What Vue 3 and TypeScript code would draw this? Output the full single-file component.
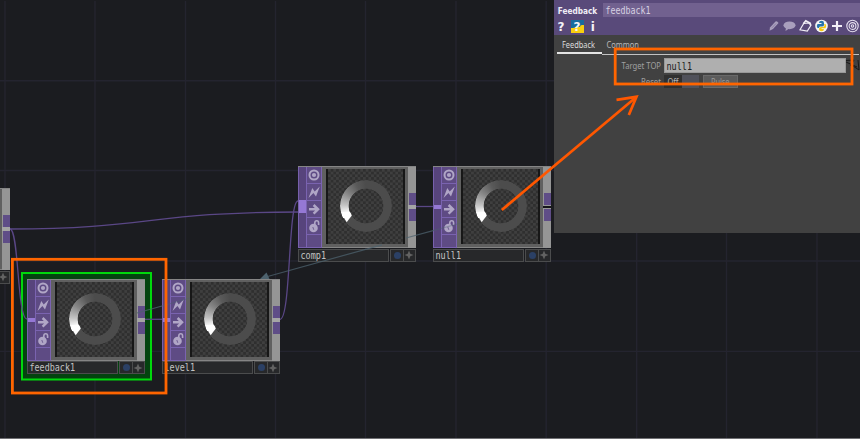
<script setup lang="ts">
interface OpNode {
  name: string
  x: number
  y: number
  nameWidth: number
  input: '' | 'single' | 'multi'
  outLine: 'light' | 'dark'
}

const nodes: OpNode[] = [
  { name: '', x: -108, y: 188, nameWidth: 0, input: '', outLine: 'light' },
  { name: 'comp1', x: 298, y: 166, nameWidth: 25.5, input: 'multi', outLine: 'light' },
  { name: 'null1', x: 433, y: 166, nameWidth: 25.5, input: 'single', outLine: 'dark' },
  { name: 'feedback1', x: 27, y: 278.6, nameWidth: 45.5, input: 'single', outLine: 'light' },
  { name: 'level1', x: 162, y: 278.6, nameWidth: 30.5, input: 'single', outLine: 'light' },
]

const gridX = [5, 95, 185.5, 275.5, 365.5, 456, 546.2, 636.7, 726.5, 817]
const gridY = [80.8, 170.5, 261, 351.4]
</script>

<template>
  <main class="editor">
    <svg class="layer" width="860" height="439">
      <g stroke="#24242f" stroke-width="1.4">
        <line v-for="x in gridX" :key="'x' + x" :x1="x" :x2="x" y1="1" y2="438" />
        <line v-for="y in gridY" :key="'y' + y" x1="0" x2="860" :y1="y" :y2="y" />
      </g>
      <rect x="22" y="273" width="129" height="106.500" fill="#04430f" stroke="#00d80c" stroke-width="2" />
      <g fill="none" stroke="#5a4786" stroke-width="1.3">
        <path d="M10 229 C150 229 150 212 298 212" />
        <path d="M10 229 C19 229 17 319 27 319" />
        <path d="M145 319.300 H162" />
        <path d="M280 319.300 C291 319.300 288 201 298 201" />
        <path d="M415 206.500 H434" />
      </g>
    </svg>

    <article v-for="n in nodes" :key="n.name" class="node" :style="{ left: n.x + 'px', top: n.y + 'px' }">
      <div class="body">
        <div class="inputs"><i v-if="n.input" :class="n.input"></i></div>
        <div class="flags">
          <span>
            <svg viewBox="0 0 16 16"><circle cx="8" cy="8" r="4.500" fill="none" stroke="#b0a6c6" stroke-width="2" /><circle cx="8" cy="8" r="2.100" fill="#b0a6c6" /></svg>
          </span>
          <span>
            <svg viewBox="0 0 16 16"><path d="M2.500 14 L6.300 4 L8.700 7.400 L13.800 2.500 L10 12.400 L7.400 9 Z" fill="#b0a6c6" /></svg>
          </span>
          <span>
            <svg viewBox="0 0 16 16"><path d="M3 8.300 H11 M7.600 4 L12 8.300 L7.600 12.600" fill="none" stroke="#b0a6c6" stroke-width="2.500" /></svg>
          </span>
          <span>
            <svg viewBox="0 0 16 16"><circle cx="7.500" cy="10" r="4.300" fill="#b0a6c6" /><path d="M8.800 7.500 V5 Q8.800 2.800 10.800 2.800 Q12.600 2.800 12.600 5 V7" fill="none" stroke="#b0a6c6" stroke-width="1.600" /><path d="M6.800 9 L7.800 11.800" stroke="#5e4b84" stroke-width=".8" /></svg>
          </span>
          <span></span>
        </div>
        <div class="frame">
          <div class="view">
            <div class="ring"></div>
            <svg class="tip" width="79" height="75"><path d="M15.300 43 L15.300 46 L19.700 53.300 L24.800 46.400 L23.500 43.500 Z" fill="#fff" /></svg>
          </div>
        </div>
        <div class="outputs">
          <b></b><i :class="n.outLine"></i><b></b>
        </div>
      </div>
      <div class="foot">
        <div class="name">
          <svg v-if="n.name" width="60" height="11"><text x="1.500" y="9" class="mono" :textLength="n.nameWidth" lengthAdjust="spacingAndGlyphs">{{ n.name }}</text></svg>
        </div>
        <div class="dot"><i></i></div>
        <div class="plus">
          <svg width="10" height="10" viewBox="0 0 10 10"><path d="M5 .5 L6.300 3.700 L9.500 5 L6.300 6.300 L5 9.500 L3.700 6.300 L.5 5 L3.700 3.700 Z" fill="#626262" /></svg>
        </div>
      </div>
    </article>

    <svg class="layer" width="860" height="439">
      <g stroke="#4d626e" stroke-width="1.200">
        <path d="M137 313 L162 306" opacity=".8" />
        <path d="M162 306 L190 298" opacity=".45" />
        <path d="M264 277.500 L382 244.800" opacity=".75" />
        <path d="M406 238 L434 230.300" opacity=".75" />
        <path d="M434 230.300 L461 223" opacity=".4" />
      </g>
      <path d="M260 279 L266.500 272.500 L269.500 279 Z" fill="#4d626e" />
    </svg>

    <section class="panel">
      <header>
        <div class="title">
          <svg width="49" height="14"><text x="3.700" y="10.500" class="bold" textLength="39.500" lengthAdjust="spacingAndGlyphs">Feedback</text></svg>
          <div class="opname">
            <svg width="80" height="14"><text x="2.500" y="11.300" class="mono head" textLength="45" lengthAdjust="spacingAndGlyphs">feedback1</text></svg>
          </div>
        </div>
        <div class="tools">
          <div class="left">
            <svg width="10" height="14"><text x=".5" y="11.500" class="glyph">?</text></svg>
            <svg class="pyhelp" width="13" height="13"><rect width="13" height="8" fill="#176a9e" /><path d="M0 8 H2 Q4 8 4 7 H9 Q9 5 11 5 H13 V13 H0Z" fill="#f8cf10" /><text x="2.500" y="11" class="glyph">?</text></svg>
            <svg width="8" height="14"><text x=".7" y="11.500" class="glyph">i</text></svg>
          </div>
          <div class="right">
            <svg width="12" height="14" viewBox="0 0 12 14"><path d="M1.500 11.800 L2 8.500 L7.500 2.500 Q9 1.500 10.500 4 L5 10 Z" fill="#a99fbd" /><path d="M4 8.800 L8 4.500" stroke="#85799f" stroke-width=".8" /></svg>
            <svg width="13" height="14" viewBox="0 0 13 14"><ellipse cx="6.500" cy="6.300" rx="6" ry="3.900" fill="#a99fbd" /><path d="M3 8 L2.500 12 L7 9Z" fill="#a99fbd" /></svg>
            <svg width="13" height="14" viewBox="0 0 13 14"><path d="M1 10.800 L4.700 4.500 L10.500 3.800 L11.800 6.500 L8.300 12 Z" fill="none" stroke="#f0edf5" stroke-width="1.200" /><path d="M4.300 4.800 L6.800 1.800 L11 4.200 L11.800 6.500" fill="none" stroke="#f0edf5" stroke-width="1.700" /></svg>
            <svg width="13" height="14" viewBox="0 0 13 14"><circle cx="6.500" cy="7" r="6.300" fill="#f4f4f4" /><path d="M4 4 Q4 1.800 6.500 1.800 Q9 1.800 9 4 V6 Q9 7.500 7 7.500 H5 Q4 7.500 4 9 H2.500 Q1 7 2.500 5 H6.500 V4Z" fill="#2875ac" /><path d="M9 5 H10.500 Q12 7 10.500 9.200 H6.500 V10 H9 Q9 12.200 6.500 12.200 Q4 12.200 4 10 Q4 8 6 8 H8 Q9.500 8 9.500 6Z" fill="#f6c80f" /></svg>
            <svg width="12" height="14" viewBox="0 0 12 14"><path d="M6 2 V12 M1 7 H11" stroke="#f3f0f7" stroke-width="2.200" /></svg>
            <svg width="13" height="14" viewBox="0 0 13 14"><g fill="none" stroke="#e6e0ef" stroke-width="1.100"><circle cx="6.500" cy="7" r="5.700" /><circle cx="6.500" cy="7" r="3.400" /><circle cx="6.500" cy="7" r="1.200" /></g></svg>
          </div>
        </div>
      </header>
      <nav>
        <div class="tab active"><svg width="45" height="15"><text x="5" y="12.800" class="sans tabt" textLength="33" lengthAdjust="spacingAndGlyphs">Feedback</text></svg></div>
        <div class="tab"><svg width="45" height="15"><text x="4.500" y="12.800" class="sans tabt dim" textLength="32.500" lengthAdjust="spacingAndGlyphs">Common</text></svg></div>
      </nav>
      <div class="row">
        <div class="label"><svg width="46" height="14"><text x="3.500" y="10.700" class="sans lab" textLength="39.500" lengthAdjust="spacingAndGlyphs">Target TOP</text></svg></div>
        <div class="field"><svg width="50" height="14"><text x="1.500" y="10.700" class="mono dark" textLength="25.500" lengthAdjust="spacingAndGlyphs">null1</text></svg></div>
        <svg class="pick" width="14" height="15"><path d="M0 2.500 L8 2 L4.500 8 M0 4 L11 9 M7 8 L13 12 L12 2" fill="none" stroke="#181818" /></svg>
      </div>
      <div class="row second">
        <div class="label"><svg width="46" height="13"><text x="23" y="9.700" class="sans lab" textLength="20" lengthAdjust="spacingAndGlyphs">Reset</text></svg></div>
        <div class="off"><svg width="18" height="13"><text x="3.500" y="9.700" class="sans offt" textLength="11" lengthAdjust="spacingAndGlyphs">Off</text></svg></div>
        <div class="toggle"></div>
        <div class="pulse"><svg width="33" height="11"><text x="7" y="8.900" class="sans pulset" textLength="18.500" lengthAdjust="spacingAndGlyphs">Pulse</text></svg></div>
      </div>
    </section>

    <svg class="layer" width="860" height="439">
      <g fill="none" stroke="#ff6500" stroke-width="2.800">
        <rect x="12.400" y="259.300" width="153.600" height="133.700" />
        <rect x="615.200" y="49" width="236.800" height="35" />
      </g>
      <g fill="none" stroke="#ff5700" stroke-width="2.700">
        <path d="M501.800 210 L636 97.300" />
        <path d="M616.500 99.800 L636.500 96.800 L628.800 115" />
      </g>
    </svg>
  </main>
</template>

<style>
body { background: #1b1c20; overflow: hidden; }
</style>

<style scoped>
.editor { position: relative; width: 860px; height: 439px; overflow: hidden; background: #1b1c20; box-sizing: border-box; border-bottom: 1px solid #707074; }
.editor * { box-sizing: border-box; }
svg { display: block; flex: none; overflow: visible; }
.layer { position: absolute; left: 0; top: 0; }
.mono { font: 10.500px "DejaVu Sans Mono", monospace; fill: #c4c4c4; }
.mono.head { fill: #d6d0e2; }
.mono.dark { fill: #202020; }
.sans { font: 9.5px "Noto Sans", sans-serif; }
.bold { font: bold 8px "DejaVu Sans", sans-serif; fill: #f1eef6; }
.glyph { font: bold 12px "DejaVu Sans", sans-serif; fill: #f5f3f8; }
.tabt { fill: #dcdcdc; font-size: 9.300px; }
.tabt.dim { fill: #b8b8b8; }
.lab { fill: #a0a0a0; font-size: 9.200px; }
.offt { fill: #b8b8b8; }
.pulset { fill: #989898; font-size: 9px; }

.node { position: absolute; width: 117.500px; display: flex; flex-direction: column; gap: .5px; }
.body { height: 82px; display: flex; background: #666; border-top: 1px solid #858585; }
.inputs { width: 7.5px; background: #57447c; border: 1px solid #7760ac; border-right: 0; border-top: 0; }
.inputs i { display: block; width: 7px; background: #9578d5; }
.inputs .single { height: 4px; margin-top: 38px; }
.inputs .multi { height: 13px; margin-top: 33px; }
.flags { width: 16.500px; background: #5e4b84; border: 1px solid #7a63b0; border-top: 0; display: grid; grid-template-rows: 17px 17px 17px 17px 1fr; }
.flags span { border-bottom: 1px solid #7a63b0; }
.flags span:last-child { border: 0; }
.flags svg { width: 16px; height: 16px; margin-left: -1px; }
.frame { width: 86px; padding: 2px 3.500px 4px 4px; background: #606060; border-bottom: 1px solid #858585; }
.view { position: relative; height: 75px; border: solid #171717; border-width: 0 2px; background: repeating-conic-gradient(#2f2f2f 0 25%, #3f3f3f 0 50%) 0 0 / 5.4px 5.4px; }
.ring { position: absolute; left: 12px; top: 11.300px; width: 52px; height: 52px; border-radius: 50%; background: conic-gradient(#4c4c4c 0 241deg, #fff 241deg 250deg, #c4c4c4 272deg, #858585 305deg, #5a5a5a 335deg, #4c4c4c 359deg); -webkit-mask: radial-gradient(circle, transparent 17px, #000 17.700px); mask: radial-gradient(circle, transparent 17px, #000 17.700px); }
.tip { position: absolute; left: -1.200px; top: 0; }
.outputs { width: 7.5px; background: #959595; padding-top: 26px; display: flex; flex-direction: column; }
.outputs b { height: 12px; background: #5f4d87; margin-left: 1px; }
.outputs i { height: 4px; background: #a5a5a5; }
.outputs i.dark { background: linear-gradient(#999 1px, #15151a 1px 3px, #999 3px); }
.foot { height: 13px; display: flex; }
.foot > div { height: 13px; border: 1px solid #4b4c4d; background: #27282a; display: flex; align-items: center; }
.foot .name { width: 91px; }
.foot .dot { width: 14px; margin-left: 1px; justify-content: center; }
.dot i { width: 7px; height: 7px; border-radius: 50%; background: #2b4065; }
.foot .plus { width: 12px; margin-left: -1px; flex: 1; justify-content: center; }

.panel { position: absolute; left: 554px; top: 0; width: 306px; height: 233.400px; background: #414141; }
header { height: 35px; background: #594a7a; padding-top: 3px; }
.title { display: flex; height: 14px; }
.opname { flex: 1; background: #71618f; }
.tools { display: flex; justify-content: space-between; padding: 2px 1px 0 3px; }
.left { display: flex; gap: 4px; }
.pyhelp { margin-top: 1px; }
.left svg:last-child { margin-left: 1.500px; }
.right { display: flex; gap: 3px; }
nav { display: flex; height: 20px; margin-left: 3px; align-items: flex-start; }
.tab { height: 20px; border-bottom: 1px solid #c2c2c2; }
.tab:last-child { flex: 1; margin-right: 1px; }
.tab.active { height: 19px; border-bottom: 2px solid #e4e4e4; }
.row { display: flex; margin-top: 3px; height: 15px; }
.label { width: 110px; display: flex; justify-content: flex-end; }
.field { width: 182px; background: #afafaf; border: 1px solid #999; }
.second { margin-top: 2px; height: 13px; }
.off { width: 18px; background: #303030; }
.toggle { width: 17px; background: #50515a; margin-right: 3.500px; }
.pulse { width: 35px; background: #5b5b5b; border: 1px solid #696969; }
</style>
